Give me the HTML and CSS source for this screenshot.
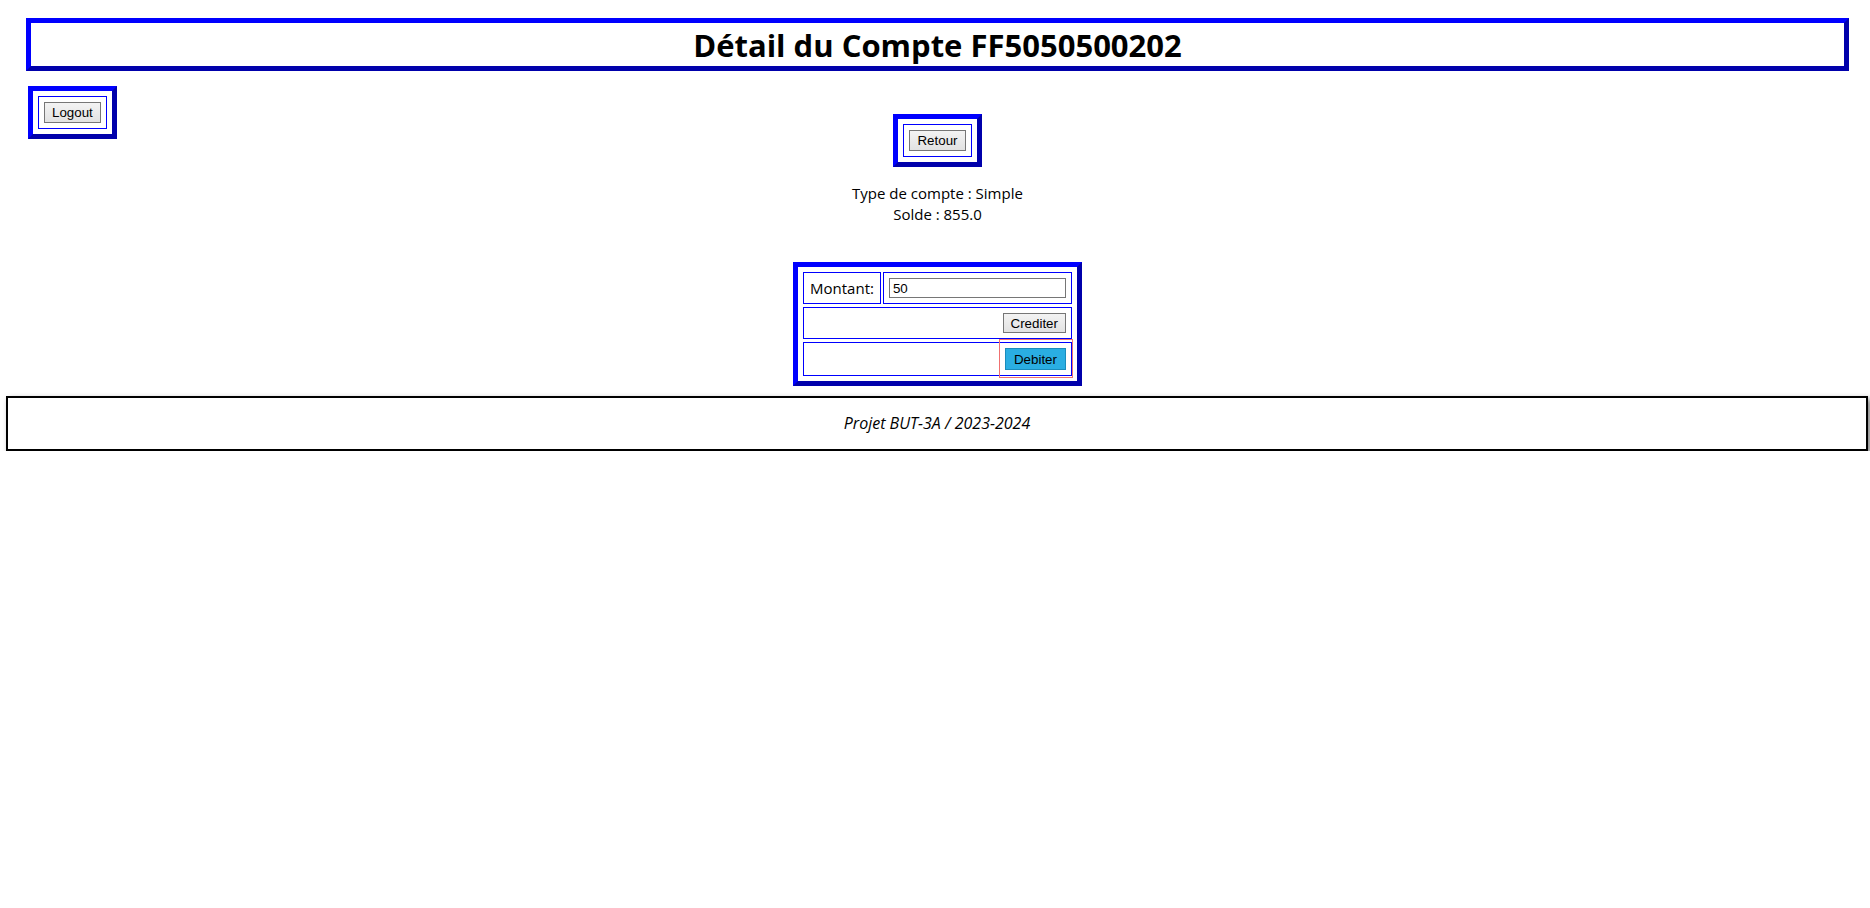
FILE: index.html
```html
<!DOCTYPE html>
<html lang="fr">
<head>
<meta charset="utf-8">
<title>Détail du Compte</title>
<link rel="stylesheet" href="styles.css">
</head>
<body>
<div class="page">
  <header class="title-box">
    <h1 class="title">Détail du Compte FF5050500202</h1>
  </header>
  <div class="main">
    <div class="side">
      <div class="btn-frame">
        <div class="btn-cell"><button class="btn" type="button">Logout</button></div>
      </div>
    </div>
    <div class="center">
      <div class="btn-frame">
        <div class="btn-cell"><button class="btn" type="button">Retour</button></div>
      </div>
      <div class="info">
        <p class="info-line">Type de compte : Simple</p>
        <p class="info-line">Solde : 855.0</p>
      </div>
      <form class="op-form">
        <div class="cell label-cell">Montant:</div>
        <div class="cell input-cell"><input class="amount" type="text" value="50"></div>
        <div class="cell wide-cell"><button class="btn btn-small" type="button">Crediter</button></div>
        <div class="cell wide-cell">
          <span class="focus-wrap"><button class="btn btn-debit" type="button">Debiter</button></span>
        </div>
      </form>
    </div>
    <div class="side"></div>
  </div>
</div>
<footer class="footer">
  <p class="footer-text">Projet BUT-3A / 2023-2024</p>
</footer>
</body>
</html>
```

FILE: styles.css
```css
html, body {
  margin: 0;
  padding: 0;
  background: #ffffff;
}

body {
  font-family: "Open Sans", "Noto Sans", sans-serif;
  font-size: 15px;
  color: #000000;
}

.page {
  margin: 0 21px 0 26px;
  padding-top: 18px;
}

.title-box {
  border: 5px outset #0000ff;
  height: 53px;
  box-sizing: border-box;
  display: flex;
  align-items: center;
  justify-content: center;
}

.title {
  margin: 0;
  font-size: 31px;
  font-weight: 700;
  line-height: 42px;
}

.main {
  display: grid;
  grid-template-columns: 1fr auto 1fr;
  margin-top: 15px;
}

.side {
  display: flex;
  align-items: flex-start;
  padding-left: 2px;
}

.center {
  display: flex;
  flex-direction: column;
  align-items: center;
  padding-top: 28px;
}

.btn-frame {
  border: 5px outset #0000ff;
  padding: 5px;
}

.btn-cell {
  border: 1px solid #0000ff;
  padding: 5px;
  display: flex;
}

.btn {
  -webkit-appearance: none;
  appearance: none;
  font-family: "Liberation Sans", Arial, sans-serif;
  font-size: 13.33px;
  color: #000000;
  height: 21px;
  padding: 0 7px;
  border: 1px solid #767676;
  border-radius: 0;
  background: linear-gradient(#f3f3f3, #e2e2e2);
  line-height: 17px;
}

.info {
  margin-top: 16px;
  text-align: center;
}

.info-line {
  margin: 0;
  line-height: 21px;
}

.op-form {
  margin: 37px 0 0 0;
  border: 5px outset #0000ff;
  padding: 5px;
  display: grid;
  grid-template-columns: auto 189px;
  column-gap: 2px;
  row-gap: 3px;
}

.cell {
  border: 1px solid #0000ff;
  padding: 5px;
  display: flex;
  align-items: center;
}

.label-cell {
  padding: 5px 6px 5px 6px;
  font-size: 15px;
  line-height: 20px;
}

.input-cell {
  justify-content: flex-start;
}

.amount {
  width: 177px;
  height: 20px;
  box-sizing: border-box;
  border: 1px solid #767676;
  padding: 0 3px;
  margin: 0;
  font-family: "Liberation Sans", Arial, sans-serif;
  font-size: 13.33px;
  color: #000000;
  outline: none;
}

.wide-cell {
  grid-column: 1 / span 2;
  justify-content: flex-end;
}

.btn-small {
  height: 20px;
}

.focus-wrap {
  position: relative;
  display: inline-flex;
}

.focus-wrap::after {
  content: "";
  position: absolute;
  top: -9px;
  right: -7px;
  bottom: -8px;
  left: -6px;
  border: 1px solid #f07070;
  pointer-events: none;
}

.btn-debit {
  height: 22px;
  padding: 0 8px;
  background: #2aaee2;
  border: 1px solid #1a8cbc;
}

.footer {
  margin: 10px 2px 0 6px;
  border: 2px solid #000000;
  box-shadow: 3px 3px 6px rgba(0, 0, 0, 0.5);
  padding: 15px 0;
  text-align: center;
}

.footer-text {
  margin: 0;
  font-size: 16px;
  font-style: italic;
  line-height: 21px;
}
```
